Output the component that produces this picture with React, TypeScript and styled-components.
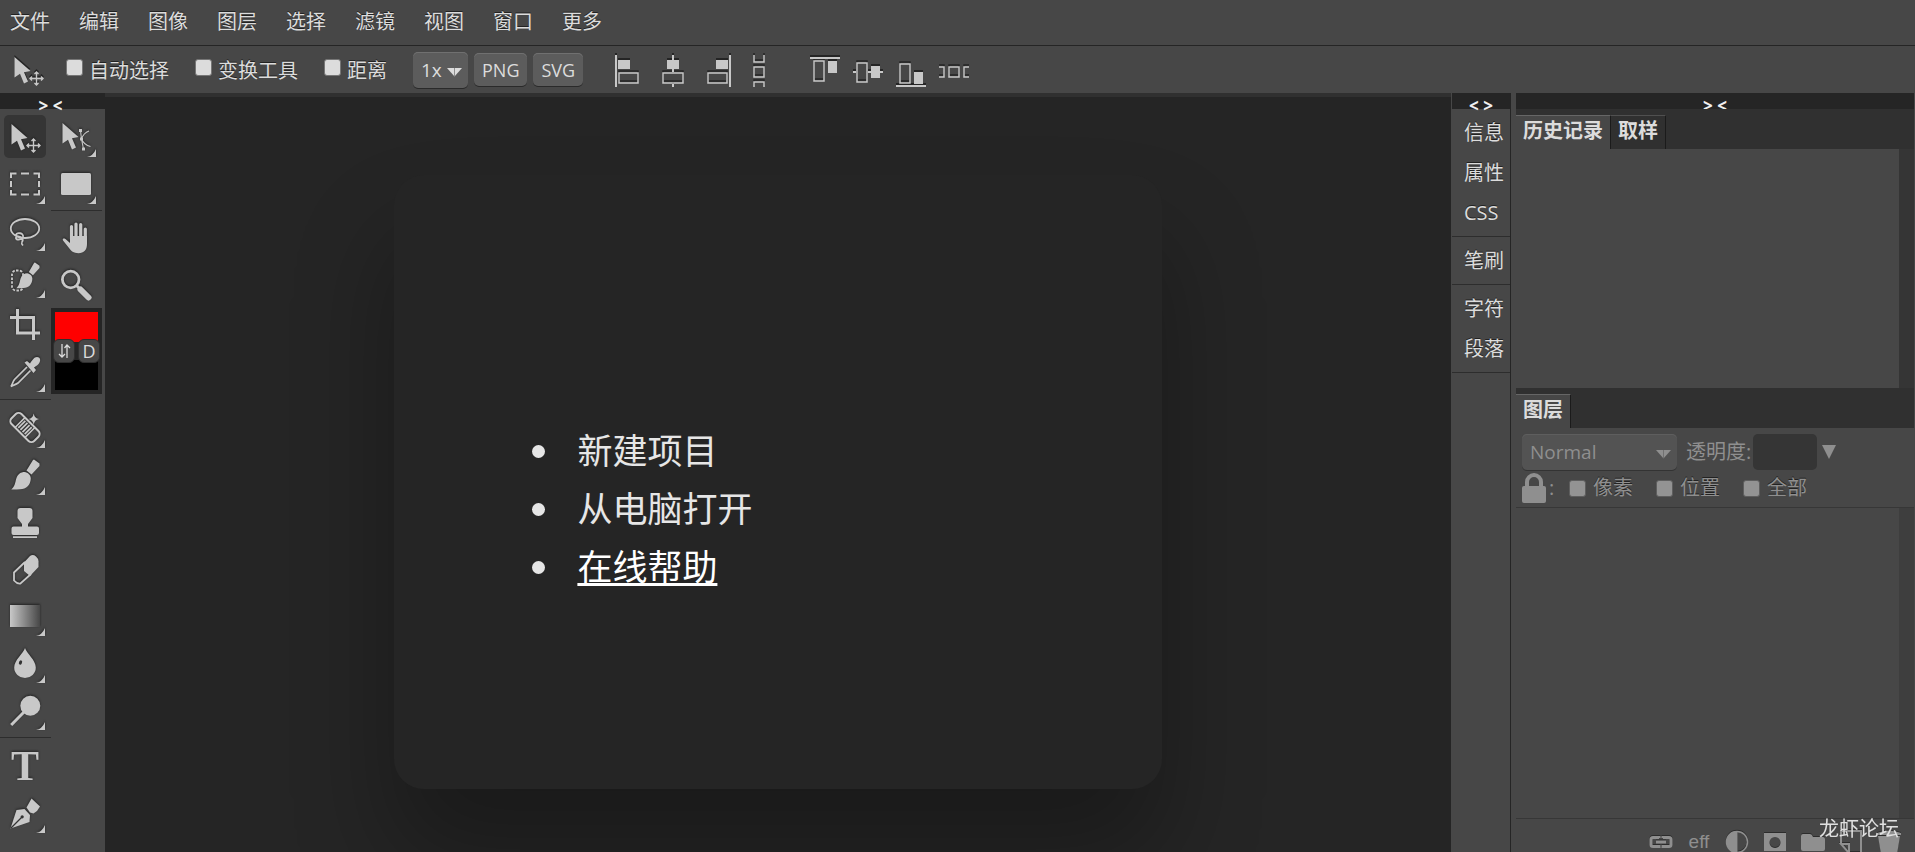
import React from "react";
import styled, { createGlobalStyle, css } from "styled-components";

const c = {
  base: "#474747",
  dark: "#252525",
  bar: "#303030",
  text: "#dcdcdc",
  icon: "#c8c8c8",
  dim: "#8f8f8f",
  line: "#2d2d2d",
};

const Global = createGlobalStyle`
  *, *::before, *::after { box-sizing: border-box; }
  body {
    margin: 0;
    background: ${c.base};
    color: ${c.text};
    font: 20px/24px "Open Sans", "Noto Sans CJK SC", sans-serif;
  }
  button, input, select { font: inherit; color: inherit; margin: 0; }
  ul { margin: 0; padding: 0; }
`;

const Shell = styled.div`
  height: 100vh;
  display: flex;
  flex-direction: column;
  overflow: hidden;
`;

/* ---------- top bars ---------- */
const MenuBar = styled.nav`
  height: 46px;
  flex: none;
  display: flex;
  align-items: center;
  gap: 29px;
  padding: 0 10px 2px;
  border-bottom: 1px solid ${c.dark};
`;
const MenuItem = styled.button`
  border: 0;
  padding: 0;
  background: none;
  text-shadow: 0 -1px 0 #222;
`;

const OptionsBar = styled.div`
  height: 47px;
  flex: none;
  display: flex;
  align-items: center;
  padding-left: 12px;
`;
const OptionChecks = styled.div`
  display: flex;
  gap: 26px;
  margin: 0 26px 0 22px;
`;
const CheckLabel = styled.label<{ $dim?: boolean }>`
  display: flex;
  align-items: center;
  gap: ${(p) => (p.$dim ? 7 : 6)}px;
  padding-top: ${(p) => (p.$dim ? 0 : 2)}px;
  white-space: nowrap;
  text-shadow: 0 -1px 0 #222;
  color: ${(p) => (p.$dim ? c.dim : c.text)};
`;
const Check = styled.input.attrs({ type: "checkbox" })<{ $dim?: boolean }>`
  appearance: none;
  width: 17px;
  height: 17px;
  margin-bottom: ${(p) => (p.$dim ? 0 : 7)}px;
  border-radius: 3px;
  border: 1px solid ${(p) => (p.$dim ? "#5e5e5e" : "#767676")};
  background: ${(p) => (p.$dim ? "#939393" : "#dcdcdc")};
`;
const raised = css`
  border: 0;
  border-radius: 5px;
  background: #5c5c5c;
  box-shadow: 0 1px 0 #2a2a2a, inset 0 1px 0 #707070;
`;
const Buttons = styled.div`
  display: flex;
  align-items: center;
  gap: 6px;
  margin-right: 32px;
`;
const SmallButton = styled.button`
  ${raised}
  height: 33px;
  padding: 0 8px;
  font-size: 18px;
  line-height: 24px;
`;
const SelectBox = styled.div<{ $wide?: boolean }>`
  position: relative;
  flex: none;
  width: ${(p) => (p.$wide ? 155 : 55)}px;
  color: ${(p) => (p.$wide ? c.dim : c.text)};
  select {
    ${raised}
    ${(p) => p.$wide && "background: #535353; box-shadow: 0 1px 0 #333, inset 0 1px 0 #5e5e5e;"}
    appearance: none;
    width: 100%;
    height: 36px;
    padding: 0 8px;
    font-size: 19px;
  }
  svg {
    position: absolute;
    right: 6px;
    top: 16px;
    pointer-events: none;
  }
`;
const AlignGroup = styled.div<{ $gap: number }>`
  display: flex;
  gap: ${(p) => p.$gap}px;
  padding-top: 3px;
  margin-right: 44px;
`;
const AlignButton = styled.button`
  border: 0;
  padding: 0;
  background: none;
  display: flex;
  color: ${c.icon};
  svg { filter: drop-shadow(0 -2px 0 rgba(25, 25, 25, 0.75)); }
`;

/* ---------- body ---------- */
const Body = styled.div`
  flex: 1;
  min-height: 0;
  display: flex;
`;
const Fold = styled.button`
  display: block;
  width: 100%;
  height: 16px;
  flex: none;
  border: 0;
  padding: 0;
  background: ${c.dark};
  color: #f0f0f0;
  font-size: 17px;
  font-weight: 700;
  line-height: 26px;
`;

const Tools = styled.aside`
  width: 105px;
  flex: none;
  overflow: hidden;
  & > ${Fold} { padding-right: 4px; }
`;
const ToolColumns = styled.div`
  display: grid;
  grid-template-columns: 51px 51px;
  align-items: start;
  padding-top: 4px;
`;
const ToolColumn = styled.div<{ $gap: number }>`
  display: flex;
  flex-direction: column;
  & > hr { margin: ${(p) => p.$gap}px 0; }
`;
const ToolRule = styled.hr`
  width: 100%;
  height: 1px;
  border: 0;
  background: ${c.line};
`;
const ToolButton = styled.button<{ $on?: boolean }>`
  position: relative;
  width: 42px;
  height: 43px;
  margin: 2px 4px;
  padding: 0;
  border: 0;
  border-radius: 5px;
  background: ${(p) => (p.$on ? "#353535" : "none")};
  color: ${c.icon};
  display: grid;
  place-items: center;
  svg { overflow: visible; filter: drop-shadow(0 -1px 1px rgba(20, 20, 20, 0.7)); }
`;
const Corner = styled.span`
  position: absolute;
  right: 1px;
  bottom: 1px;
  display: flex;
`;
const Swatches = styled.div`
  position: relative;
  height: 86px;
  border: 4px solid ${c.dark};
  background: ${c.dark};
  display: flex;
  flex-direction: column;
  justify-content: space-between;
`;
const Swatch = styled.button<{ $color: string }>`
  height: 30px;
  border: 0;
  padding: 0;
  background: ${(p) => p.$color};
`;
const SwatchActions = styled.div`
  position: absolute;
  inset: 27px -2px auto;
  display: flex;
  justify-content: space-between;
`;
const SwatchAction = styled.button`
  width: 22px;
  height: 24px;
  padding: 0;
  border: 1px solid #2f2f2f;
  border-radius: 6px;
  background: #474747;
  font-size: 18px;
  line-height: 22px;
  display: grid;
  place-items: center;
`;

const Canvas = styled.main`
  flex: 1;
  min-width: 0;
  overflow: hidden;
  border-top: 4px solid ${c.bar};
  background: ${c.dark};
  margin-right: 1px;
`;
const Card = styled.section`
  width: 57%;
  aspect-ratio: 5 / 4;
  margin: 78px auto 0;
  padding: 247px 0 0 183px;
  border-radius: 30px;
  background: ${c.dark};
  box-shadow: 0 66px 100px rgba(0, 0, 0, 0.3);
`;
const StartList = styled.ul`
  list-style: none;
  font-size: 35px;
  line-height: 58px;
  color: #e6e6e6;
`;
const StartItem = styled.li`
  display: flex;
  align-items: center;
  gap: 32px;
  height: 58px;
  &::before {
    content: "";
    width: 13px;
    height: 13px;
    margin-left: -45px;
    border-radius: 50%;
    background: #e6e6e6;
  }
`;
const StartLink = styled.a<{ $active?: boolean }>`
  color: ${(p) => (p.$active ? "#fff" : "#e6e6e6")};
  text-decoration: ${(p) => (p.$active ? "underline" : "none")};
  text-decoration-thickness: 3px;
  text-underline-offset: 3px;
  text-decoration-skip-ink: none;
`;

const Dock = styled.aside`
  width: 59px;
  flex: none;
  border-right: 1px solid ${c.dark};
`;
const DockGroup = styled.div`
  padding: 3px 0 4px;
  border-bottom: 1px solid ${c.line};
`;
const DockItem = styled.button`
  display: block;
  width: 100%;
  height: 40px;
  padding: 1px 0 0 12px;
  border: 0;
  background: none;
  text-align: left;
  white-space: nowrap;
  text-shadow: 0 -1px 0 #222;
`;

const Panels = styled.aside`
  width: 398px;
  flex: none;
  margin: 0 1px 0 5px;
  display: flex;
  flex-direction: column;
  min-height: 0;
`;
const Tabs = styled.div`
  flex: none;
  display: flex;
  padding-top: 6px;
  background: ${c.bar};
`;
const Tab = styled.button<{ $on?: boolean }>`
  height: 34px;
  padding: 0 7px 3px;
  border: 0;
  border-top: 1px solid ${(p) => (p.$on ? "#666" : "#505050")};
  border-right: 1px solid #1b1b1b;
  background: ${(p) => (p.$on ? c.base : c.bar)};
  font-size: 20px;
  font-weight: 700;
`;
const Well = styled.div<{ $grow?: boolean }>`
  ${(p) => (p.$grow ? "flex: 1; min-height: 0;" : "flex: none; height: 239px;")}
  border-right: 15px solid ${(p) => (p.$grow ? "#3e3e3e" : "#353535")};
`;
const LayerOptions = styled.div`
  flex: none;
  padding: 5px 6px 1px;
  color: ${c.dim};
  border-bottom: 1px solid #373737;
`;
const LayerRow = styled.div`
  display: flex;
  align-items: center;
  height: 37px;
`;
const Opacity = styled.label`
  display: flex;
  align-items: center;
  gap: 2px;
  margin: 0 5px 0 9px;
  white-space: nowrap;
  input {
    width: 64px;
    height: 36px;
    border: 0;
    border-radius: 5px;
    background: #353535;
  }
`;
const PlainButton = styled.button`
  border: 0;
  padding: 0;
  background: none;
  color: inherit;
  display: flex;
`;
const LockRow = styled.div`
  display: flex;
  align-items: center;
  height: 36px;
`;
const LockMark = styled.span`
  display: flex;
  align-items: center;
  gap: 3px;
  width: 47px;
`;
const LockChecks = styled.div`
  display: flex;
  gap: 23px;
`;
const Footer = styled.footer`
  flex: none;
  height: 34px;
  overflow: hidden;
  border-top: 1px solid #373737;
  padding: 11px 13px 0 0;
  display: flex;
  justify-content: flex-end;
  gap: 14px;
  color: ${c.dim};
  font: 19px/24px "Liberation Sans", sans-serif;
  button { width: 24px; justify-content: center; }
  svg { flex: none; filter: drop-shadow(0 -1px 0 #2c2c2c); }
`;
const Watermark = styled.div`
  position: fixed;
  right: 16px;
  bottom: 11px;
  color: #e0e0e0;
  font-size: 20px;
  line-height: 24px;
  pointer-events: none;
`;

/* ---------- drawings ---------- */
const Arrow = () => (
  <svg width="15" height="9" viewBox="0 0 15 9" aria-hidden>
    <path d="M0 0H15L7.500 8.500Z" fill="currentColor" />
    <path d="M7.500 0V8" stroke="#5c5c5c" strokeWidth=".6" />
  </svg>
);

const Icon = ({ children }: { children: React.ReactNode }) => (
  <svg width="32" height="32" viewBox="0 0 32 32" fill="none" stroke="none" aria-hidden>
    {children}
  </svg>
);
const F = "currentColor";
const brushPath =
  "M25 .5 30.5 4.5 30.5 7 22.5 15.5 17.5 11.5 24 1ZM15.5 13C19 13.5 21.8 16 21.8 19.5 21.5 26 17.5 30 11 30.3 8 30.5 5 30.6 2.3 30.5 6 27 6 24 7.3 19.5 8.8 15 12 13 15.5 13Z";
const pointer = "M2.5 3 18.5 17 12 18.3 16 27.5 12 29.5 8 19.7 2.5 23.5Z";

const icons: Record<string, React.ReactNode> = {
  move: (
    <>
      <path d={pointer} fill={F} />
      <path
        d="M24.5 18v13M18 24.5h13M22.5 20l2-2 2 2M22.5 29l2 2 2-2M20 22.5l-2 2 2 2M29 22.5l2 2-2 2"
        stroke={F}
        strokeWidth="1.4"
      />
    </>
  ),
  pathSelect: (
    <>
      <path d={pointer} fill={F} transform="translate(0 -1)" />
      <path d="M20.5 9.500 21.500 18 23.500 28M21.500 18Q23.500 12 29 10M21.500 18Q24 24 30.500 25.500" stroke={F} strokeWidth="1.100" />
      <path d="M19 8h3v3h-3zM20 16.500h3v3h-3zM22 26.500h3v3h-3z" fill={F} />
    </>
  ),
  marquee: (
    <path
      d="M2 10V5.500H7.500M12 5.500h8M24.500 5.500H30V10M30 13v6M30 22v4.500H24.500M20 26.500h-8M7.500 26.500H2V22M2 19v-6"
      stroke={F}
      strokeWidth="2"
    />
  ),
  rect: <rect x="1" y="5" width="30" height="22" rx="1.500" fill={F} />,
  lasso: (
    <g stroke={F} strokeWidth="1.800">
      <ellipse cx="16" cy="13.500" rx="14.200" ry="9.500" />
      <path d="M6.500 20.500C8 16.500 15 18 14 22 13 25 6 25.500 7 22.500 8.500 19.500 15 23 13.500 26 12.500 28 12 28 14 30.500" />
    </g>
  ),
  quick: (
    <>
      <rect x="3" y="8.500" width="11" height="20" rx="4" stroke={F} strokeWidth="1.800" strokeDasharray="2.500 1.400" />
      <g transform="translate(5.500 0) scale(.82 .86)">
        <path d={brushPath} fill={F} />
      </g>
    </>
  ),
  crop: <path d="M1 8.500H24.500V31M8.500 0V24H31" stroke={F} strokeWidth="3" />,
  dropper: (
    <>
      <path d="M18 11 5.500 23.500C4 25.500 3.500 28 2 30.500 4.500 29 7 28.500 9 27L21.500 14.500" stroke={F} strokeWidth="1.700" />
      <path d="M15.500 6.500 18 5l3 2.500C23 4.500 25 1 28 1c3 0 4 3 2.500 5.500-1 2-3 3.500-5.500 5L27 14l-2.500 3Z" fill={F} />
    </>
  ),
  heal: (
    <>
      <g transform="translate(16 15.500) rotate(45)">
        <rect x="-16" y="-7" width="32" height="14" rx="4" stroke={F} strokeWidth="2" />
        <path d="M-7-7V7M7-7V7" stroke={F} strokeWidth="1.500" />
        <path d="M-4.500-5V5M-1.500-5V5M1.500-5V5M4.500-5V5" stroke={F} strokeWidth="1.700" />
      </g>
      <path d="M24.700 1.500q.8 4.800 5.300 5.500-4.500.8-5.300 5.500-.8-4.700-5.300-5.500 4.500-.7 5.300-5.500Z" fill={F} />
    </>
  ),
  brush: <path d={brushPath} fill={F} />,
  stamp: (
    <path
      d="M11.500 2h9q3 0 3 3v7l-4.500 6v2.500h9q2 0 2 2v4.500q0 2-2 2H4.500q-2 0-2-2v-4.500q0-2 2-2H13V18l-4.500-6V5q0-3 3-3ZM4 30.200H28v1.800H4Z"
      fill={F}
    />
  ),
  eraser: (
    <>
      <path d="M15 9.500 21 3q3-2 6 .5 3 2.500 2.500 6V14L21 23l-6-5Z" fill={F} />
      <path d="M16 9 5 19.500v8Q8 31 11.500 30.500L22 21" stroke={F} strokeWidth="1.800" />
    </>
  ),
  gradient: (
    <>
      <defs>
        <linearGradient id="fade">
          <stop offset="0" stopColor={c.icon} />
          <stop offset="1" stopColor={c.base} />
        </linearGradient>
      </defs>
      <rect x="1" y="5" width="30" height="22" fill="url(#fade)" />
    </>
  ),
  blur: (
    <>
      <path d="M16 1C18 7 26.800 13 26.800 20.500a10.800 10.500 0 0 1-21.600 0C5.200 13 14 7 16 1Z" fill={F} />
      <ellipse cx="11.500" cy="15.500" rx="1.500" ry="2.200" fill="#333" transform="rotate(25 11.500 15.500)" />
    </>
  ),
  dodge: (
    <>
      <circle cx="21.300" cy="11.700" r="10" fill={F} />
      <path d="M15 18 2.200 31" stroke={F} strokeWidth="3" />
    </>
  ),
  type: (
    <text x="16" y="30" textAnchor="middle" fontFamily="Liberation Serif, serif" fontWeight="700" fontSize="42" fill={F}>
      T
    </text>
  ),
  pen: (
    <>
      <path d="M22.500 1.500 31 9.500 28 14 24.500 16.500 21 15.500 17.500 10.500Z" fill={F} />
      <path d="M1.500 31.500 7.500 13l8-1L21 18l-.5 7Z" fill={F} />
      <path d="M2 31 13 20" stroke="#333" strokeWidth="1.200" />
      <circle cx="13.200" cy="19.800" r="1.600" fill="#333" />
    </>
  ),
  hand: (
    <>
      <path
        d="M11.500 17V4.500M16 16V2M20.700 16V2.500M25.300 18V7"
        stroke={F}
        strokeWidth="3.200"
        strokeLinecap="round"
      />
      <path d="M10 14H27v8c0 6-3 9.200-8.500 9.200-5 0-7.500-2.200-9.500-5.200L3 18.500c-1-2 1-2.500 2.500-1.500L10 21Z" fill={F} />
    </>
  ),
  zoom: (
    <>
      <circle cx="10.700" cy="10.500" r="8.300" stroke={F} strokeWidth="2.800" />
      <path d="M16.500 16.500 21 21" stroke={F} strokeWidth="3" />
      <path d="M20.500 20.500 28.500 28.500" stroke={F} strokeWidth="6" strokeLinecap="round" />
    </>
  ),
};

const Shape = ({ w, solid, lines }: { w: number; solid?: string; lines: string }) => (
  <svg width={w} height="32" viewBox={`0 0 ${w} 32`} aria-hidden>
    {solid && <path d={solid} fill="currentColor" />}
    <path d={lines} fill="none" stroke="currentColor" strokeWidth="1.500" />
  </svg>
);

const alignX = [
  { name: "左对齐", w: 30, solid: "M0 0h2v32h-2zM3 5h12v9h-12z", lines: "M4 18h19v10h-19z" },
  { name: "水平居中", w: 30, solid: "M12 0h2v5h-2zM12 14h2v3h-2zM12 29h2v3h-2zM7 5h12v9h-12z", lines: "M3 18h20v10h-20z" },
  { name: "右对齐", w: 30, solid: "M24 0h2v32h-2zM11 5h12v9h-12z", lines: "M3 18h19v10h-19z" },
  { name: "垂直分布", w: 16, lines: "M4 0v7h10v-7M4 12h10v10h-10zM4 32v-5h10v5" },
];
const alignY = [
  { name: "顶对齐", w: 30, solid: "M0 2h30v2h-30zM18 6h9v12h-9z", lines: "M4 6h10v20h-10z" },
  { name: "垂直居中", w: 30, solid: "M0 16h3v2h-3zM15 16h3v2h-3zM27 16h3v2h-3zM18 11h9v12h-9z", lines: "M4 8h10v19h-10z" },
  { name: "底对齐", w: 30, solid: "M0 30h30v2h-30zM18 17h9v12h-9z", lines: "M4 9h10v19h-10z" },
  { name: "水平分布", w: 30, lines: "M0 12h5v10h-5M10 12h10v10h-10zM30 12h-5v10h5" },
];

type ToolDef = [string, string, boolean];
const leftTools: ToolDef[][] = [
  [
    ["move", "移动", false],
    ["marquee", "选框", true],
    ["lasso", "套索", true],
    ["quick", "快速选择", true],
    ["crop", "裁剪", false],
    ["dropper", "吸管", true],
  ],
  [
    ["heal", "修复", true],
    ["brush", "画笔", true],
    ["stamp", "图章", false],
    ["eraser", "橡皮擦", false],
    ["gradient", "渐变", true],
    ["blur", "模糊", true],
    ["dodge", "减淡", true],
  ],
  [
    ["type", "文字", false],
    ["pen", "钢笔", true],
  ],
];
const rightTools: ToolDef[][] = [
  [
    ["pathSelect", "路径选择", true],
    ["rect", "矩形", true],
  ],
  [
    ["hand", "抓手", false],
    ["zoom", "缩放", false],
  ],
];

const ToolGroups = ({ groups }: { groups: ToolDef[][] }) => (
  <>
    {groups.map((group, i) => (
      <React.Fragment key={i}>
        {i > 0 && <ToolRule />}
        {group.map(([id, label, more]) => (
          <ToolButton key={id} aria-label={label} $on={id === "move"}>
            <Icon>{icons[id]}</Icon>
            {more && (
              <Corner>
                <svg width="9" height="8" viewBox="0 0 9 8" aria-hidden>
                  <path d="M9 0V8H0Q6 7 9 0Z" fill="currentColor" />
                </svg>
              </Corner>
            )}
          </ToolButton>
        ))}
      </React.Fragment>
    ))}
  </>
);

const menus = ["文件", "编辑", "图像", "图层", "选择", "滤镜", "视图", "窗口", "更多"];
const dock = [["信息", "属性", "CSS"], ["笔刷"], ["字符", "段落"]];

export default function App() {
  return (
    <Shell>
      <Global />
      <MenuBar>
        {menus.map((m) => (
          <MenuItem key={m}>{m}</MenuItem>
        ))}
      </MenuBar>

      <OptionsBar>
        <AlignButton aria-label="移动工具">
          <Icon>{icons.move}</Icon>
        </AlignButton>
        <OptionChecks>
          {["自动选择", "变换工具", "距离"].map((t) => (
            <CheckLabel key={t}>
              <Check />
              {t}
            </CheckLabel>
          ))}
        </OptionChecks>
        <Buttons>
          <SelectBox>
            <select aria-label="倍率">
              <option>1x</option>
            </select>
            <Arrow />
          </SelectBox>
          <SmallButton>PNG</SmallButton>
          <SmallButton>SVG</SmallButton>
        </Buttons>
        {[alignX, alignY].map((set, i) => (
          <AlignGroup key={i} $gap={i === 0 ? 15 : 13}>
            {set.map(({ name, ...shape }) => (
              <AlignButton key={name} aria-label={name}>
                <Shape {...shape} />
              </AlignButton>
            ))}
          </AlignGroup>
        ))}
      </OptionsBar>

      <Body>
        <Tools>
          <Fold>&gt; &lt;</Fold>
          <ToolColumns>
            <ToolColumn $gap={4}>
              <ToolGroups groups={leftTools} />
            </ToolColumn>
            <ToolColumn $gap={3}>
              <ToolGroups groups={rightTools} />
              <Swatches>
                <Swatch $color="#ff0000" aria-label="前景色" />
                <Swatch $color="#000000" aria-label="背景色" />
                <SwatchActions>
                  <SwatchAction aria-label="交换颜色">
                    <svg width="13" height="14" viewBox="0 0 13 14" fill="none" stroke="currentColor" strokeWidth="1.300" aria-hidden>
                      <path d="M4 0V13M1 10l3 3 3-3M9 14V1M6.500 4 9 1l3 3" />
                    </svg>
                  </SwatchAction>
                  <SwatchAction>D</SwatchAction>
                </SwatchActions>
              </Swatches>
            </ToolColumn>
          </ToolColumns>
        </Tools>

        <Canvas>
          <Card>
            <StartList>
              <StartItem>
                <StartLink href="#new">新建项目</StartLink>
              </StartItem>
              <StartItem>
                <StartLink href="#open">从电脑打开</StartLink>
              </StartItem>
              <StartItem>
                <StartLink href="#help" $active>
                  在线帮助
                </StartLink>
              </StartItem>
            </StartList>
          </Card>
        </Canvas>

        <Dock>
          <Fold>&lt; &gt;</Fold>
          {dock.map((group) => (
            <DockGroup key={group[0]}>
              {group.map((d) => (
                <DockItem key={d}>{d}</DockItem>
              ))}
            </DockGroup>
          ))}
        </Dock>

        <Panels>
          <Fold>&gt; &lt;</Fold>
          <Tabs>
            <Tab $on>历史记录</Tab>
            <Tab>取样</Tab>
          </Tabs>
          <Well />
          <Tabs>
            <Tab $on>图层</Tab>
          </Tabs>
          <LayerOptions>
            <LayerRow>
              <SelectBox $wide>
                <select aria-label="混合模式">
                  <option>Normal</option>
                </select>
                <Arrow />
              </SelectBox>
              <Opacity>
                透明度:
                <input type="text" />
              </Opacity>
              <PlainButton aria-label="调整透明度">
                <svg width="14" height="14" viewBox="0 0 14 14" aria-hidden>
                  <path d="M0 0H14L7 14Z" fill="currentColor" />
                </svg>
              </PlainButton>
            </LayerRow>
            <LockRow>
              <LockMark>
                <svg width="24" height="30" viewBox="0 0 24 30" aria-hidden>
                  <path d="M5 14V9a7 7 0 0 1 14 0v5" fill="none" stroke="currentColor" strokeWidth="4" />
                  <rect y="13" width="24" height="17" rx="2" fill="currentColor" />
                </svg>
                :
              </LockMark>
              <LockChecks>
                {["像素", "位置", "全部"].map((t) => (
                  <CheckLabel key={t} $dim>
                    <Check $dim />
                    {t}
                  </CheckLabel>
                ))}
              </LockChecks>
            </LockRow>
          </LayerOptions>
          <Well $grow />
          <Footer>
            <PlainButton aria-label="链接图层">
              <svg width="24" height="24" viewBox="0 0 24 24" fill="none" stroke="currentColor" strokeWidth="3" aria-hidden>
                <path d="M10 8V7.500H4q-2 0-2 2v5q0 2 2 2h6V15M14 8V7.500h6q2 0 2 2v5q0 2-2 2h-6V15M7 12h10" />
              </svg>
            </PlainButton>
            <PlainButton>eff</PlainButton>
            <PlainButton aria-label="调整图层">
              <svg width="24" height="24" viewBox="0 0 24 24" aria-hidden>
                <circle cx="12" cy="12" r="10.500" fill="none" stroke="currentColor" strokeWidth="1.500" />
                <path d="M12.500 1a11 11 0 0 0 0 22Z" fill="currentColor" />
              </svg>
            </PlainButton>
            <PlainButton aria-label="蒙版">
              <svg width="24" height="24" viewBox="0 0 24 24" aria-hidden>
                <path fillRule="evenodd" d="M1 3H23V21H1ZM12 7a5.500 5.500 0 1 0 .01 0Z" fill="currentColor" />
              </svg>
            </PlainButton>
            <PlainButton aria-label="新建文件夹">
              <svg width="24" height="24" viewBox="0 0 24 24" aria-hidden>
                <path d="M2 4h7q2 0 3 3h10q2 0 2 2v10q0 2-2 2H2q-2 0-2-2V6q0-2 2-2Z" fill="currentColor" />
              </svg>
            </PlainButton>
            <PlainButton aria-label="新建图层">
              <svg width="24" height="24" viewBox="0 0 24 24" fill="none" stroke="currentColor" strokeWidth="2" aria-hidden>
                <path d="M2 13V1H22V23H10L2 14H10V23" />
              </svg>
            </PlainButton>
            <PlainButton aria-label="删除">
              <svg width="24" height="24" viewBox="0 0 24 24" aria-hidden>
                <path d="M0 3Q12-2 24 3V5H0ZM1 6H23L20 24H4Z" fill="currentColor" />
              </svg>
            </PlainButton>
          </Footer>
        </Panels>
      </Body>
      <Watermark>龙虾论坛</Watermark>
    </Shell>
  );
}
